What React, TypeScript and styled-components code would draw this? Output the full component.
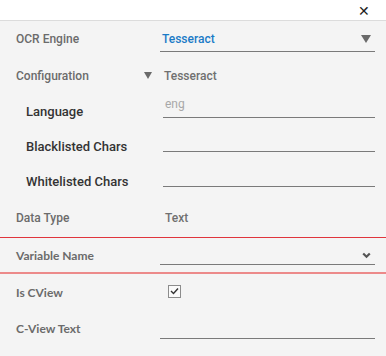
import React from "react";
import styled, { createGlobalStyle } from "styled-components";

const GlobalStyle = createGlobalStyle`
  html, body {
    margin: 0;
    padding: 0;
    background: #f4f4f4;
  }
  body {
    font-family: Roboto, "Liberation Sans", sans-serif;
  }
`;

const Panel = styled.div`
  width: 386px;
  height: 356px;
  background: #f4f4f4;
  overflow: hidden;
`;

const TopBar = styled.div`
  height: 20px;
  background: #fff;
  border-bottom: 1px solid #dcdcdc;
  display: flex;
  justify-content: flex-end;
  align-items: center;
  padding-right: 16px;
`;

const CloseBtn = styled.span`
  font-size: 14px;
  color: #222;
  line-height: 1;
  margin-top: 1px;
`;

const Body = styled.div`
  padding: 0 11px 0 16px;
`;

const Row = styled.div<{ h?: number; indent?: boolean }>`
  display: flex;
  align-items: center;
  height: ${(p) => p.h ?? 36}px;
  padding-left: ${(p) => (p.indent ? 10 : 0)}px;
`;

const Label = styled.div<{ strong?: boolean; lato?: boolean; w?: number }>`
  width: ${(p) => p.w ?? 144}px;
  flex-shrink: 0;
  font-family: ${(p) => (p.lato ? "Lato, sans-serif" : "Roboto, sans-serif")};
  font-size: ${(p) => (p.strong ? 13 : 12)}px;
  font-weight: ${(p) => (p.strong ? 500 : p.lato ? 700 : 500)};
  color: ${(p) => (p.strong ? "#333" : "#6b6b6b")};
`;

const Field = styled.div<{ offset?: number }>`
  flex: 1;
  align-self: stretch;
  display: flex;
  align-items: flex-end;
  padding-bottom: ${(p) => p.offset ?? 5}px;
`;

const Underline = styled.div`
  flex: 1;
  height: 20px;
  border-bottom: 1px solid #7a7a7a;
  display: flex;
  align-items: center;
  justify-content: space-between;
  padding: 0 4px 2px 2px;
  font-size: 12px;
`;

const SelectValue = styled.span`
  color: #1b7bc7;
  font-weight: 500;
  font-size: 12px;
`;

const Placeholder = styled.span`
  color: #a8a8a8;
  font-size: 12px;
  margin-top: -2px;
`;

const PlainValue = styled.span<{ pad?: number }>`
  color: #707070;
  font-size: 12px;
  font-weight: 500;
  padding-left: ${(p) => p.pad ?? 5}px;
`;

const Caret = styled.span`
  display: inline-block;
  width: 0;
  height: 0;
  border-left: 5px solid transparent;
  border-right: 5px solid transparent;
  border-top: 8px solid #6a6a6a;
`;

const ConfigCaret = styled(Caret)`
  margin-left: -16px;
  margin-right: 12px;
  border-left-width: 4px;
  border-right-width: 4px;
  border-top-width: 7px;
`;

const VariableBlock = styled.div`
  margin: 0 -11px 0 -16px;
  padding: 0 11px 0 16px;
  border-top: 1px solid #e0353c;
  border-bottom: 2px solid #ec8a8a;
`;

const Chevron = styled.svg`
  margin-top: 6px;
`;

const Checkbox = styled.span`
  width: 11px;
  height: 11px;
  border: 1px solid #8c8c8c;
  background: #fafafa;
  display: flex;
  align-items: center;
  justify-content: center;
  margin-left: 8px;
  margin-top: -2px;
`;

export default function App() {
  return (
    <Panel>
      <GlobalStyle />
      <TopBar>
        <CloseBtn>✕</CloseBtn>
      </TopBar>
      <Body>
        <Row h={36}>
          <Label>OCR Engine</Label>
          <Field offset={5}>
            <Underline>
              <SelectValue>Tesseract</SelectValue>
              <Caret />
            </Underline>
          </Field>
        </Row>
        <Row h={37}>
          <Label>Configuration</Label>
          <ConfigCaret />
          <PlainValue pad={0}>Tesseract</PlainValue>
        </Row>
        <Row h={35} indent>
          <Label strong w={137}>Language</Label>
          <Field offset={11}>
            <Underline>
              <Placeholder>eng</Placeholder>
            </Underline>
          </Field>
        </Row>
        <Row h={35} indent>
          <Label strong w={137}>Blacklisted Chars</Label>
          <Field offset={12}>
            <Underline />
          </Field>
        </Row>
        <Row h={35} indent>
          <Label strong w={137}>Whitelisted Chars</Label>
          <Field offset={12}>
            <Underline />
          </Field>
        </Row>
        <Row h={38}>
          <Label>Data Type</Label>
          <PlainValue>Text</PlainValue>
        </Row>
        <VariableBlock>
          <Row h={34}>
            <Label lato>Variable Name</Label>
            <Field offset={7}>
              <Underline>
                <span />
                <Chevron width="9" height="7" viewBox="0 0 9 7">
                  <path d="M1.2 1.5 L4.5 4.8 L7.8 1.5" stroke="#555" strokeWidth="2.2" fill="none" />
                </Chevron>
              </Underline>
            </Field>
          </Row>
        </VariableBlock>
        <Row h={36}>
          <Label lato>Is CView</Label>
          <Checkbox>
            <svg width="9" height="8" viewBox="0 0 9 8">
              <path d="M1 4 L3.5 6.5 L8 1.5" stroke="#333" strokeWidth="1.4" fill="none" />
            </svg>
          </Checkbox>
        </Row>
        <Row h={36}>
          <Label lato>C-View Text</Label>
          <Field offset={7}>
            <Underline />
          </Field>
        </Row>
      </Body>
    </Panel>
  );
}
